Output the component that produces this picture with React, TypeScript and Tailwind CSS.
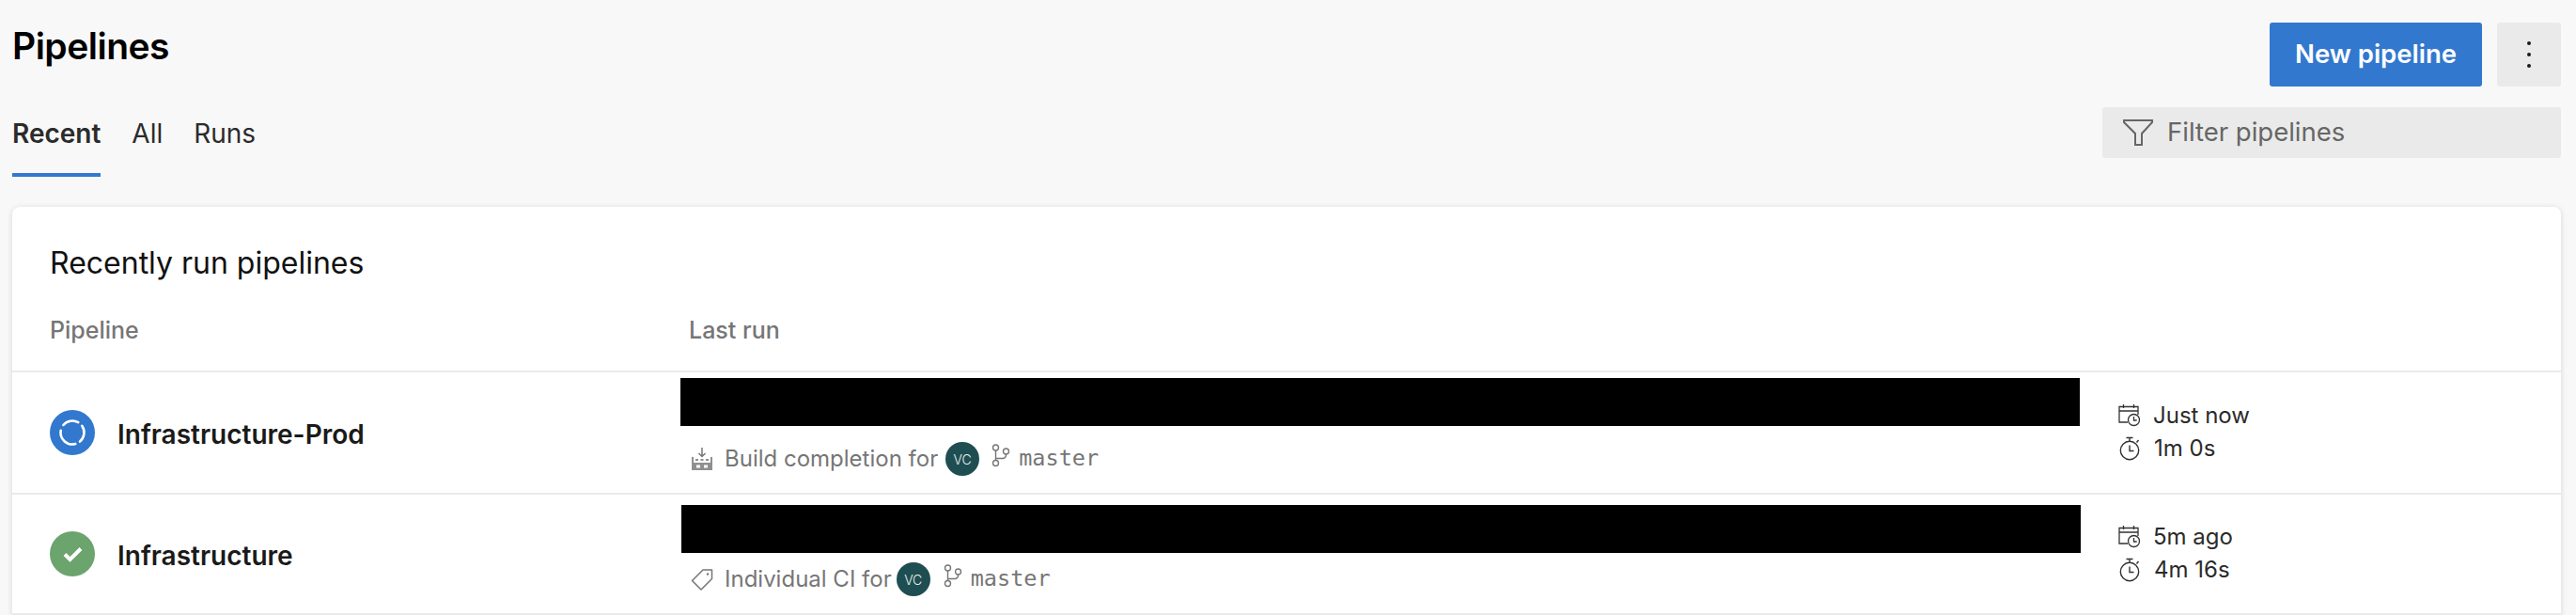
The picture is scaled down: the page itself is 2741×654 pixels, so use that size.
function Funnel() {
  return (
    <svg width="34" height="30" viewBox="0 0 34 30" fill="none" stroke="#666666" strokeWidth="2">
      <path d="M2 2h30v2L21 16v12h-7V16L2 4z" />
    </svg>
  );
}

function Running() {
  return (
    <svg width="48" height="48" viewBox="0 0 48 48" className="shrink-0">
      <circle cx="24" cy="24" r="24" fill="#3278ce" />
      <g fill="none" stroke="#ffffff" strokeWidth="2.6" strokeLinecap="round">
        <path d="M14.42 15.97A12.5 12.5 0 0 1 30.25 13.17" />
        <path d="M34.24 16.83A12.5 12.5 0 0 1 32.03 33.58" />
        <path d="M27.24 36.07A12.5 12.5 0 0 1 11.69 21.83" />
      </g>
    </svg>
  );
}

function Success() {
  return (
    <svg width="48" height="48" viewBox="0 0 48 48" className="shrink-0">
      <circle cx="24" cy="24" r="24" fill="#6ba46c" />
      <path d="M16 24.5l5.5 5.5L33 18.5" fill="none" stroke="#ffffff" strokeWidth="4" />
    </svg>
  );
}

function BuildIcon() {
  return (
    <svg width="24" height="24" viewBox="0 0 24 24" className="shrink-0">
      <path d="M12 0v9.5M8.5 6l3.5 3.5L15.500 6" fill="none" stroke="#767676" strokeWidth="1.5" />
      <path d="M1 10h2v6h18v-6h2v14H1z" fill="#8f8f8f" />
      <path d="M5 12h3v2H5zM10.500 12h3v2h-3zM16 12h3v2h-3z" fill="#8f8f8f" />
      <path d="M6 18.500h4v3H6zM14 18.500h4v3h-4z" fill="#ffffff" />
    </svg>
  );
}

function TagIcon() {
  return (
    <svg width="24" height="24" viewBox="0 0 24 24" fill="none" stroke="#767676" strokeWidth="1.500" className="shrink-0">
      <path d="M1.500 13.500L13 2h9.500v9.500L11 23z" strokeLinejoin="round" />
      <circle cx="18" cy="6.500" r="1.200" fill="#767676" stroke="none" />
    </svg>
  );
}

function BranchIcon() {
  return (
    <svg width="20" height="25" viewBox="0 0 20 25" fill="none" stroke="#767676" strokeWidth="1.400" className="shrink-0">
      <circle cx="4.500" cy="4" r="3" />
      <circle cx="4.500" cy="20.500" r="3" />
      <circle cx="15.500" cy="8" r="3" />
      <path d="M4.500 7v10.500M15.500 11v1a3.500 3.500 0 0 1-3.500 3.500H4.500" />
    </svg>
  );
}

function CalendarClock() {
  return (
    <svg width="24" height="25" viewBox="0 0 24 25" fill="none" stroke="#333333" strokeWidth="1.300" className="shrink-0">
      <path d="M10 20H1V3.500h20V12M1 8h20M5.500 1v4M16.500 1v4" />
      <circle cx="16.500" cy="17.500" r="6" fill="#ffffff" />
      <path d="M16.500 14v4h3.200" />
    </svg>
  );
}

function Stopwatch() {
  return (
    <svg width="24" height="26" viewBox="0 0 24 26" fill="none" stroke="#333333" strokeWidth="1.400" className="shrink-0">
      <circle cx="11" cy="15" r="9.700" />
      <path d="M7.500 1.500h7M11 1.500v3.500M18.500 6.500l2-2.500M11 9.500V15.500h4.500" />
    </svg>
  );
}

function Avatar() {
  return (
    <span className="flex h-[36px] w-[36px] shrink-0 items-center justify-center rounded-full bg-[#1e4e52] text-[14px] font-light text-[#e6efef]">
      VC
    </span>
  );
}

function Row({
  status,
  name,
  kindIcon,
  kind,
  when,
  took,
  rowClass,
  barClass,
  subClass,
  avatarClass,
  branchClass,
  timeClass,
}: {
  status: React.ReactNode;
  name: string;
  kindIcon: React.ReactNode;
  kind: string;
  when: string;
  took: string;
  rowClass: string;
  barClass: string;
  subClass: string;
  avatarClass: string;
  branchClass: string;
  timeClass: string;
}) {
  return (
    <div className={`flex border-b-[2px] border-[#eaeaea] ${rowClass}`}>
      <div className="flex w-[711px] shrink-0 items-center gap-[24px] pl-[40px]">
        {status}
        <span className="pt-[3px] text-[28px] font-semibold text-[#1a1a1a]">{name}</span>
      </div>
      <div className={`shrink-0 ${barClass}`}>
        <div className="h-[51px] bg-black" />
        <div className={`flex h-[36px] items-center pl-[11px] text-[24px] text-[#767676] ${subClass}`}>
          <span className="flex">{kindIcon}</span>
          <span className="ml-[12px]">{kind}</span>
          <span className={avatarClass}>
            <Avatar />
          </span>
          <span className={`-mt-[8px] ${branchClass}`}>
            <BranchIcon />
          </span>
          <span className="ml-[9px] font-['DejaVu_Sans_Mono',monospace] text-[23.5px]">master</span>
        </div>
      </div>
      <div className={`flex flex-col justify-center gap-[8px] pb-[2px] text-[24px] text-[#2b2b2b] ${timeClass}`}>
        <div className="flex h-[27px] items-center gap-[13px]">
          <CalendarClock />
          <span>{when}</span>
        </div>
        <div className="flex h-[27px] items-center gap-[13px] pl-[1px]">
          <Stopwatch />
          <span>{took}</span>
        </div>
      </div>
    </div>
  );
}

export default function App() {
  return (
    <div className="h-[654px] overflow-hidden bg-[#f8f8f8] font-['Inter',sans-serif]">
      <div className="flex h-[220px] justify-between pl-[13px] pr-[16px] pt-[24px]">
        <div>
          <h1 className="h-[48px] pt-[1px] text-[39px] leading-[48px] font-semibold tracking-[-0.5px] text-black">Pipelines</h1>
          <div className="mt-[46px] flex gap-[33px] text-[28px] leading-[48px] text-[#2b2b2b]">
            <div className="h-[70px] border-b-[4px] border-[#3278ce] font-semibold">Recent</div>
            <div>All</div>
            <div>Runs</div>
          </div>
        </div>
        <div className="flex w-[488px] flex-col items-end">
          <div className="flex gap-[16px]">
            <button className="h-[68px] w-[226px] rounded-[3px] bg-[#3278ce] text-[27.5px] font-semibold text-white">
              New pipeline
            </button>
            <button className="flex h-[68px] w-[68px] flex-col items-center justify-center gap-[8px] rounded-[3px] bg-[#eaeaea]">
              <span className="h-[4px] w-[4px] rounded-full bg-[#1a1a1a]" />
              <span className="h-[4px] w-[4px] rounded-full bg-[#1a1a1a]" />
              <span className="h-[4px] w-[4px] rounded-full bg-[#1a1a1a]" />
            </button>
          </div>
          <div className="mt-[22px] flex h-[54px] w-full items-center gap-[14px] rounded-[3px] bg-[#eaeaea] pl-[21px] text-[27.5px] text-[#666666]">
            <Funnel />
            <span>Filter pipelines</span>
          </div>
        </div>
      </div>
      <div className="ml-[13px] mr-[16px] rounded-t-[8px] bg-white shadow-[0_1px_6px_rgba(0,0,0,0.14)]">
        <div className="h-[176px] border-b-[2px] border-[#eaeaea] pl-[40px]">
          <div className="pt-[39px] text-[32px] leading-[42px] text-[#111111]">Recently run pipelines</div>
          <div className="mt-[34px] flex text-[25px] font-medium leading-[32px] text-[#767676]">
            <div className="w-[680px]">Pipeline</div>
            <div>Last run</div>
          </div>
        </div>
        <Row
          status={<Running />}
          name="Infrastructure-Prod"
          kindIcon={<BuildIcon />}
          kind="Build completion for"
          when="Just now"
          took="1m 0s"
          rowClass="h-[130px]"
          barClass="w-[1489px] pt-[6px]"
          subClass="mt-[17px]"
          avatarClass="ml-[8px]"
          branchClass="ml-[13px]"
          timeClass="pl-[41px]"
        />
        <Row
          status={<Success />}
          name="Infrastructure"
          kindIcon={<TagIcon />}
          kind="Individual CI for"
          when="5m ago"
          took="4m 16s"
          rowClass="h-[128px]"
          barClass="w-[1490px] pl-[1px] pt-[11px]"
          subClass="-ml-[1px] mt-[10px]"
          avatarClass="ml-[5px]"
          branchClass="ml-[14px]"
          timeClass="pl-[40px]"
        />
      </div>
    </div>
  );
}
